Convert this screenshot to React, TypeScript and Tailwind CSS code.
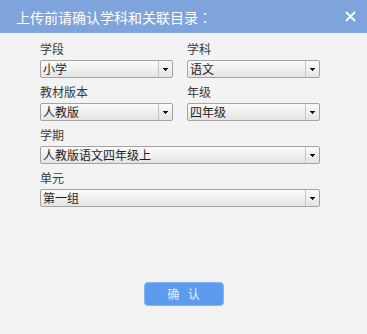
import React from "react";

const font = { fontFamily: '"Noto Sans CJK SC", "Noto Sans", sans-serif' };

function Select({ value }: { value: string }) {
  return (
    <div className="flex h-[18px] w-full rounded-[2px] border border-[#a3a3a3] bg-gradient-to-b from-[#fbfbfb] to-[#e4e4e4]">
      <div className="flex-1 overflow-hidden whitespace-nowrap pl-[2px] text-[12px] leading-[16px] text-[#1e1e1e]">
        {value}
      </div>
      <div className="flex w-[14px] items-center justify-center border-l border-[#c4c4c4]">
        <svg width="5" height="3" viewBox="0 0 5 3">
          <rect x="0" y="0" width="5" height="1" fill="#111" />
          <rect x="1" y="1" width="3" height="1" fill="#111" />
          <rect x="2" y="2" width="1" height="1" fill="#111" />
        </svg>
      </div>
    </div>
  );
}

function Field({ label, value }: { label: string; value: string }) {
  return (
    <div className="flex flex-col">
      <div className="mb-[2px] text-[12px] leading-[18px] text-[#3a3a3a]">{label}</div>
      <Select value={value} />
    </div>
  );
}

export default function App() {
  return (
    <div className="h-[334px] w-[367px] bg-[#f3f3f3]" style={font}>
      <div className="flex h-[33px] items-center justify-between bg-[#7fa4dc] pl-[16px] pr-[11px]">
        <div className="text-[14px] leading-[20px] text-white">
          上传前请确认学科和关联目录
          <span className="font-['Noto_Sans_CJK_TC',sans-serif]">：</span>
        </div>
        <svg width="11" height="11" viewBox="0 0 11 11">
          <path d="M1 1L10 10M10 1L1 10" stroke="#fff" strokeWidth="1.8" />
        </svg>
      </div>
      <div className="pl-[40px] pr-[47px] pt-[7px]">
        <div className="grid grid-cols-2 gap-x-[14px] gap-y-[5px]">
          <Field label="学段" value="小学" />
          <Field label="学科" value="语文" />
          <Field label="教材版本" value="人教版" />
          <Field label="年级" value="四年级" />
        </div>
        <div className="mt-[5px] flex flex-col gap-[5px]">
          <Field label="学期" value="人教版语文四年级上" />
          <Field label="单元" value="第一组" />
        </div>
      </div>
      <div className="mt-[75px] flex justify-center">
        <button className="h-[24px] w-[80px] rounded-[4px] border border-[#86b4f0] bg-[#5c9bed] text-[12px] text-[#e6eefb] [word-spacing:6px]">
          确 认
        </button>
      </div>
    </div>
  );
}
